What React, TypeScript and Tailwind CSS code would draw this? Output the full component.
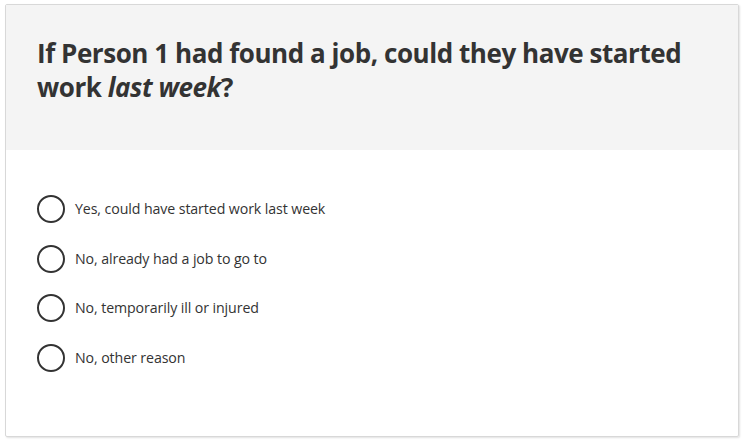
const options = [
  "Yes, could have started work last week",
  "No, already had a job to go to",
  "No, temporarily ill or injured",
  "No, other reason",
]

export default function App() {
  return (
    <div
      className="h-[443px] w-[745px] bg-white pl-[5px] pr-[6px] pt-[4px] pb-[6px]"
      style={{ fontFamily: '"Segoe UI", "Open Sans", sans-serif' }}
    >
      <div className="flex h-full flex-col overflow-hidden rounded-[2px] border border-[#d8d8d8] shadow-[1px_1px_2px_rgba(0,0,0,0.12)]">
        <div className="h-[145px] bg-[#f4f4f4] px-[31px] pt-[31px]">
          <h1 className="text-[26px] font-bold leading-[34px] tracking-[-0.45px] text-[#333]">
            If Person 1 had found a job, could they have started work <em>last week</em>?
          </h1>
        </div>
        <div className="flex flex-col gap-[21.5px] px-[31px] pt-[45px]">
          {options.map((opt) => (
            <label key={opt} className="flex cursor-pointer items-center gap-[10px]">
              <span className="h-[28px] w-[28px] shrink-0 rounded-full border-2 border-[#333] bg-white" />
              <span className="text-[14.2px] tracking-[-0.1px] text-[#333]">{opt}</span>
            </label>
          ))}
        </div>
      </div>
    </div>
  )
}
